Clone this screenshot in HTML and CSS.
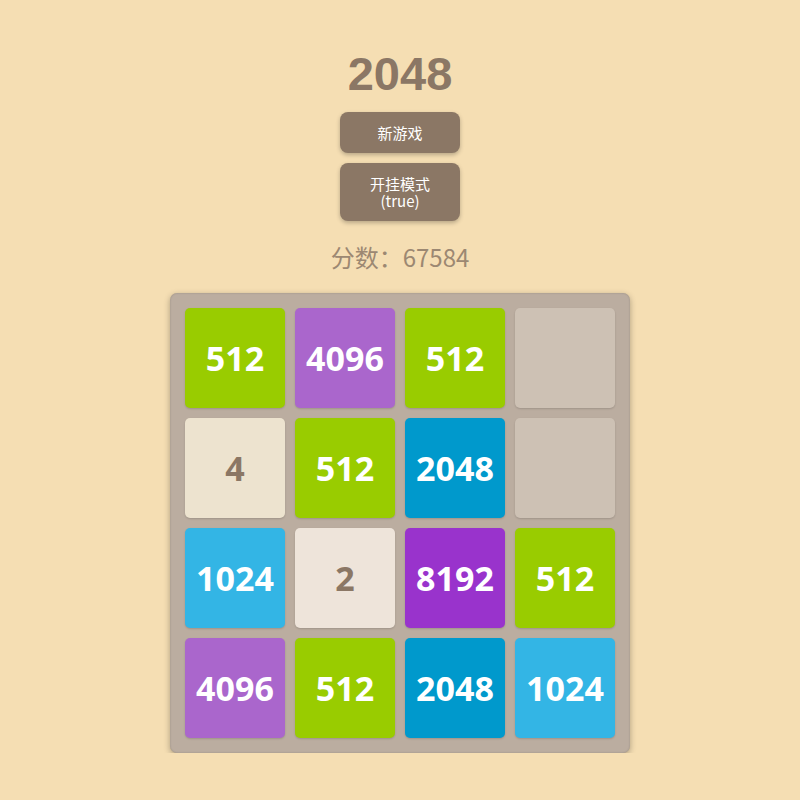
FILE: index.html
```html
<!DOCTYPE html>
<html lang="zh">
<head>
<meta charset="utf-8">
<title>2048</title>
<link rel="stylesheet" href="styles.css">
</head>
<body>
<div class="page">
  <h1 class="title">2048</h1>
  <button class="btn">新游戏</button>
  <button class="btn btn-two">开挂模式<br>(true)</button>
  <div class="score">分数：67584</div>
  <div class="board">
    <div class="tile t512">512</div>
    <div class="tile t4096">4096</div>
    <div class="tile t512">512</div>
    <div class="tile empty"></div>
    <div class="tile t4">4</div>
    <div class="tile t512">512</div>
    <div class="tile t2048">2048</div>
    <div class="tile empty"></div>
    <div class="tile t1024">1024</div>
    <div class="tile t2">2</div>
    <div class="tile t8192">8192</div>
    <div class="tile t512">512</div>
    <div class="tile t4096">4096</div>
    <div class="tile t512">512</div>
    <div class="tile t2048">2048</div>
    <div class="tile t1024">1024</div>
  </div>
</div>
</body>
</html>
```
FILE: styles.css
```css
html, body {
  margin: 0;
  padding: 0;
  background: #f5deb3;
}
.page {
  display: flex;
  flex-direction: column;
  align-items: center;
  padding-top: 47px;
}
.title {
  margin: 0;
  font-family: "Liberation Sans", Arial, sans-serif;
  font-weight: bold;
  font-size: 47px;
  line-height: 54px;
  color: #8b7765;
}
.btn {
  margin-top: 11px;
  width: 120px;
  padding: 12px 0;
  border: none;
  border-radius: 8px;
  background: #8b7765;
  color: #fff;
  font-family: "Noto Sans CJK SC", "Noto Sans", sans-serif;
  font-size: 15px;
  line-height: 17px;
  box-shadow: 0 2px 4px rgba(0, 0, 0, 0.25);
}
.btn-two {
  margin-top: 10px;
}
.score {
  margin-top: 21px;
  font-family: "Noto Sans CJK SC", "Noto Sans", sans-serif;
  font-size: 24px;
  line-height: 30px;
  color: #9c8872;
}
.board {
  margin-top: 21px;
  width: 430px;
  padding: 15px;
  display: grid;
  grid-template-columns: repeat(4, 100px);
  grid-auto-rows: 100px;
  gap: 10px;
  background: #bbada0;
  border-radius: 7px;
  box-shadow: 0 2px 6px rgba(0, 0, 0, 0.3), inset 0 0 2px rgba(0, 0, 0, 0.2);
}
.tile {
  border-radius: 5px;
  display: flex;
  align-items: center;
  justify-content: center;
  font-family: "Open Sans", "Noto Sans", sans-serif;
  font-weight: bold;
  font-size: 34px;
  color: #fff;
  box-shadow: 0 1px 2px rgba(0, 0, 0, 0.15);
}
.empty { background: #cdc1b4; }
.t2 { background: #eee4da; color: #8b7765; }
.t4 { background: #ede3cf; color: #8b7765; }
.t512 { background: #99cc00; }
.t1024 { background: #33b5e5; }
.t2048 { background: #0099cc; }
.t4096 { background: #aa66cc; }
.t8192 { background: #9933cc; }
```
